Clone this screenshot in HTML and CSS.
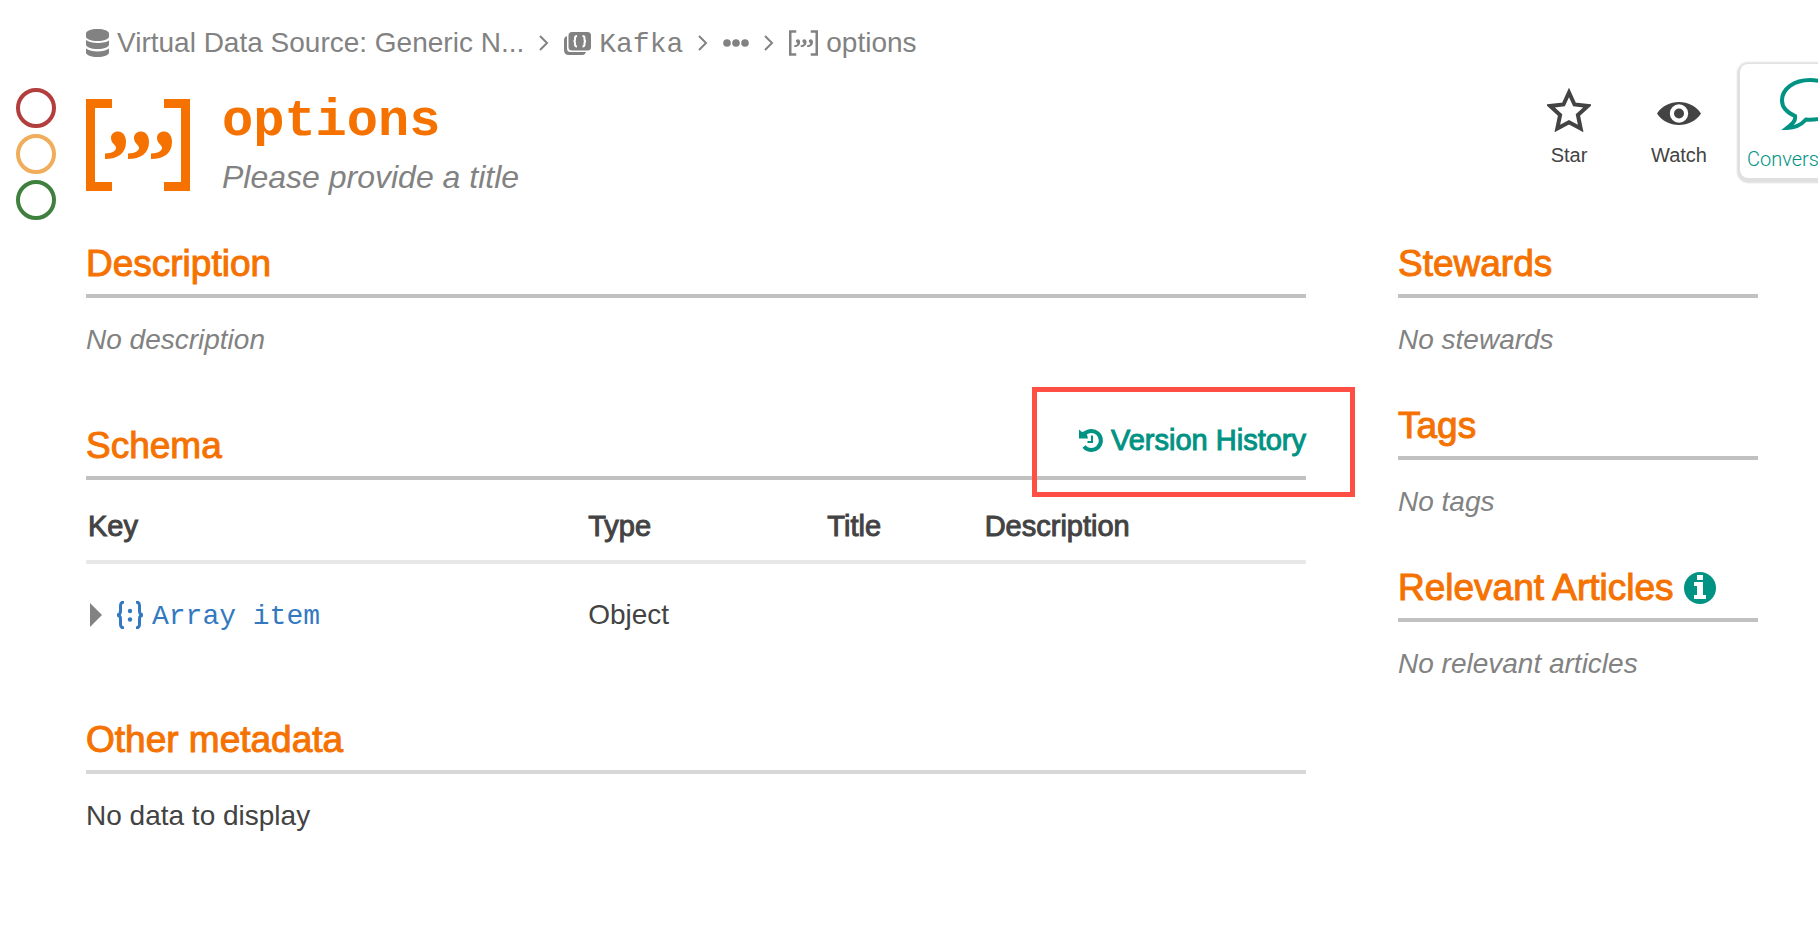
FILE: index.html
```html
<!DOCTYPE html>
<html lang="en">
<head>
<meta charset="utf-8">
<title>options</title>
<meta name="viewport" content="width=device-width, initial-scale=1">
<link rel="stylesheet" href="styles.css">
</head>
<body>
<svg class="sprite" aria-hidden="true">
  <symbol id="array" viewBox="0 0 104 92">
    <path d="M0 0h26v9H9v74h17v9H0zM104 0H78v9h17v74H78v9h26z"/>
    <path id="comma" d="M19 54.500c7-.3 11-2.500 11-5.500 0-3.500-5-4.500-5-10 0-4 3-6.500 7-6.500 5 0 8 4.500 8 10.500 0 11-8 17-21 17z"/>
    <use href="#comma" x="23"/>
    <use href="#comma" x="46"/>
  </symbol>
</svg>
<div class="page">
  <nav class="crumbs" aria-label="Breadcrumb">
    <a class="crumb" href="#">
      <svg class="icon-db" viewBox="0 0 23 28"><path d="M0 4.500C0 2 5 0 11.500 0S23 2 23 4.500v3C23 10 18 12 11.500 12S0 10 0 7.500zM0 11c2.500 2 7 3 11.500 3S23 13 23 11v4.500c0 2.500-5 4.500-11.500 4.500S0 18 0 15.500zM0 19.500c2.500 2 7 3 11.500 3s9-1 11.500-3v4c0 2.500-5 4.500-11.500 4.500S0 26 0 23.500z"/></svg>
      <span>Virtual Data Source: Generic N...</span>
    </a>
    <svg class="chevron" viewBox="0 0 10 16"><path d="M1 1l7 7-7 7"/></svg>
    <a class="crumb" href="#">
      <svg class="icon-stack" viewBox="0 0 27 23"><rect x="4.500" width="22.500" height="18.500" rx="3.500"/><path d="M3 4v12.500q0 3.500 3.500 3.500H22q-1 3-3.500 3H5q-5 0-5-5V8q0-3 3-4z"/><path class="knock" d="M13 4q-2 0-2 2v1.500q0 1.800-1.500 1.800 1.500 0 1.500 1.800V12.500q0 2 2 2M18.500 4q2 0 2 2v1.500q0 1.800 1.500 1.800-1.500 0-1.500 1.800V12.500q0 2-2 2"/></svg>
      <span class="mono">Kafka</span>
    </a>
    <svg class="chevron" viewBox="0 0 10 16"><path d="M1 1l7 7-7 7"/></svg>
    <button class="more" type="button" aria-label="Show hidden levels"><svg class="icon-dots" viewBox="0 0 26 8"><circle cx="4" cy="4" r="3.800"/><circle cx="13" cy="4" r="3.800"/><circle cx="22" cy="4" r="3.800"/></svg></button>
    <svg class="chevron" viewBox="0 0 10 16"><path d="M1 1l7 7-7 7"/></svg>
    <a class="crumb" href="#">
      <svg class="icon-array-small"><use href="#array"/></svg>
      <span>options</span>
    </a>
  </nav>

  <header class="head">
    <div class="flags">
      <button class="flag flag-red" type="button" aria-label="Deprecate"></button>
      <button class="flag flag-amber" type="button" aria-label="Warn"></button>
      <button class="flag flag-green" type="button" aria-label="Endorse"></button>
    </div>
    <svg class="icon-array"><use href="#array"/></svg>
    <div class="titles">
      <h1>options</h1>
      <p class="subtitle">Please provide a title</p>
    </div>
    <div class="actions">
      <button class="action" type="button">
        <svg class="icon-action" viewBox="0 0 44 44"><path class="star" d="M22 4.500l5.500 12 13.300 1.500-9.900 8.900 2.800 13.600L22 34.200l-11.700 6.300 2.800-13.600-9.900-8.900 13.300-1.500z"/></svg>
        <span>Star</span>
      </button>
      <button class="action" type="button">
        <svg class="icon-action" viewBox="0 0 44 44"><path fill-rule="evenodd" d="M0 25.500C5 18 13 14 22 14s17 4 22 11.500C39 33 31 37 22 37S5 33 0 25.500zM22 16.300a9.200 9.200 0 1 0 0 18.400 9.200 9.200 0 0 0 0-18.400z"/><circle cx="22" cy="25.500" r="5"/></svg>
        <span>Watch</span>
      </button>
      <button class="action talk" type="button">
        <svg class="icon-talk" viewBox="0 0 60 52"><path d="M30 2C14 2 2 11 2 22.500 2 29 7 34.500 15 38c1 5-3 8-8 12 8 0 14-3 19-8.500 18 1.500 32-7 32-19C58 11 46 2 30 2z"/></svg>
        <span>Conversations</span>
      </button>
    </div>
  </header>

  <div class="columns">
    <main class="main">
      <section>
        <div class="bar"><h2>Description</h2></div>
        <p class="note">No description</p>
      </section>
      <section>
        <div class="bar">
          <h2>Schema</h2>
          <a class="history" href="#">
            <svg class="icon-history" viewBox="0 0 24 24"><path class="arc" d="M5 6.500A9.500 9.500 0 1 1 5 18.500"/><path d="M0 1.500l3 2.500 4-1 2 7.500H0z"/><path class="hands" d="M13 7.500V14H8.500"/></svg>
            <span>Version History</span>
          </a>
          <div class="callout"></div>
        </div>
        <table class="schema">
          <thead>
            <tr><th class="col-key" scope="col">Key</th><th class="col-type" scope="col">Type</th><th class="col-title" scope="col">Title</th><th scope="col">Description</th></tr>
          </thead>
          <tbody>
            <tr>
              <td>
                <div class="key">
                  <button class="expand" type="button" aria-label="Expand"><svg class="icon-caret" viewBox="0 0 12 24"><path d="M0 0l12 12L0 24z"/></svg></button>
                  <a class="item" href="#">
                    <svg class="icon-object" viewBox="0 0 28 28"><path d="M8 1Q4.500 1 4.500 4.500V10q0 4-3.500 4 3.500 0 3.500 4v5.500Q4.500 27 8 27M20 1q3.500 0 3.500 3.500V10q0 4 3.500 4-3.500 0-3.500 4v5.500Q23.500 27 20 27"/><circle cx="14" cy="10" r="2.200"/><circle cx="14" cy="18.500" r="2.200"/></svg>
                    <span class="mono">Array item</span>
                  </a>
                </div>
              </td>
              <td>Object</td><td></td><td></td>
            </tr>
          </tbody>
        </table>
      </section>
      <section>
        <div class="bar bar-light"><h2>Other metadata</h2></div>
        <p class="plain">No data to display</p>
      </section>
    </main>

    <aside class="side">
      <section>
        <div class="bar"><h2>Stewards</h2></div>
        <p class="note">No stewards</p>
      </section>
      <section>
        <div class="bar"><h2>Tags</h2></div>
        <p class="note">No tags</p>
      </section>
      <section>
        <div class="bar">
          <h2>Relevant Articles</h2>
          <button class="info" type="button" aria-label="About relevant articles"><svg class="icon-info" viewBox="0 0 32 32"><circle cx="16" cy="16" r="16"/><path class="knock-fill" d="M13 3h6v5h-6zM10 10h9v13h3v4H10v-4h3v-9h-3z"/></svg></button>
        </div>
        <p class="note">No relevant articles</p>
      </section>
    </aside>
  </div>
</div>
</body>
</html>
```

FILE: styles.css
```css
* {
  box-sizing: border-box;
}

body {
  margin: 0;
  background: #fff;
  color: #434343;
  font: 28px/40px "Liberation Sans", Arial, sans-serif;
}

h1, h2, p {
  margin: 0;
}

a {
  color: inherit;
  text-decoration: none;
}

button {
  padding: 0;
  border: 0;
  background: none;
  color: inherit;
  font: inherit;
  cursor: pointer;
}

svg {
  display: block;
  flex: none;
  fill: currentColor;
}

.sprite {
  position: absolute;
  width: 0;
  height: 0;
}

.mono {
  padding-top: 4px;
  font-family: "Liberation Mono", "Courier New", monospace;
  line-height: 36px;
}

.page {
  padding: 23px 60px 40px 16px;
  overflow-x: clip;
}

/* Breadcrumb */
.crumbs {
  display: flex;
  align-items: center;
  gap: 15px;
  padding-left: 70px;
  color: #828282;
  white-space: nowrap;
}

.crumb {
  display: flex;
  align-items: center;
  gap: 8px;
}

.icon-db {
  width: 23px;
  height: 28px;
}

.icon-stack {
  width: 27px;
  height: 23px;
}

.icon-stack .knock {
  fill: none;
  stroke: #fff;
  stroke-width: 2;
}

.chevron {
  width: 10px;
  height: 16px;
  fill: none;
  stroke: currentColor;
  stroke-width: 2;
}

.icon-dots {
  width: 26px;
  height: 8px;
}

.icon-array-small {
  width: 29px;
  height: 26px;
}

/* Title row */
.head {
  display: flex;
  align-items: flex-start;
  margin-top: 1px;
}

.flags {
  display: flex;
  flex-direction: column;
  gap: 6px;
  margin: 24px 30px 0 0;
}

.flag {
  width: 40px;
  height: 40px;
  border: 4px solid;
  border-radius: 50%;
}

.flag-red {
  border-color: #b23f3d;
}

.flag-amber {
  border-color: #f0ad5c;
}

.flag-green {
  border-color: #3f803f;
}

.icon-array {
  width: 104px;
  height: 92px;
  margin: 35px 32px 0 0;
  color: #f57200;
}

.titles {
  flex: 1;
  padding-top: 28px;
}

h1 {
  color: #f57200;
  font: bold 52px/60px "Liberation Mono", "Courier New", monospace;
}

.subtitle {
  margin-top: 5px;
  color: #828282;
  font-size: 32px;
  font-style: italic;
}

.actions {
  display: flex;
  margin-right: -122px;
}

.action {
  display: flex;
  flex-direction: column;
  align-items: center;
  width: 110px;
  padding-top: 24px;
  font-size: 20px;
  line-height: 24px;
}

.icon-action {
  width: 44px;
  height: 44px;
  margin-bottom: 11px;
}

.star {
  fill: none;
  stroke: currentColor;
  stroke-width: 4;
}

.talk {
  width: 140px;
  margin-left: 6px;
  padding: 14px 0 7px;
  border-radius: 8px;
  box-shadow: 0 1px 2px 3px #e0e0e0, 0 3px 2px 2px #e0e0e0;
  color: #009384;
  font-family: Roboto, "Liberation Sans", sans-serif;
  font-weight: 300;
}

.icon-talk {
  width: 60px;
  height: 52px;
  margin-bottom: 17px;
  fill: none;
  stroke: currentColor;
  stroke-width: 4;
}

/* Content */
.columns {
  display: grid;
  grid-template-columns: minmax(0, 1fr) 360px;
  gap: 92px;
  margin-top: 22px;
  padding-left: 70px;
}

.main,
.side {
  display: flex;
  flex-direction: column;
  gap: 64px;
}

.side {
  gap: 44px;
}

.bar {
  position: relative;
  display: flex;
  align-items: center;
  padding-bottom: 8px;
  border-bottom: 4px solid #c1c1c1;
}

.bar-light {
  border-color: #d8d8d8;
}

h2 {
  color: #f57200;
  font-size: 37px;
  font-weight: 500;
  line-height: 44px;
  -webkit-text-stroke: 1px currentColor;
}

.note,
.plain {
  margin-top: 22px;
}

.note {
  color: #828282;
  font-style: italic;
}

.history {
  display: flex;
  align-items: center;
  align-self: flex-start;
  gap: 8px;
  margin: -4px 0 0 auto;
  color: #009384;
  font-size: 29px;
  -webkit-text-stroke: 1px currentColor;
}

.icon-history {
  width: 24px;
  height: 24px;
}

.icon-history .arc {
  fill: none;
  stroke: currentColor;
  stroke-width: 4;
}

.icon-history .hands {
  fill: none;
  stroke: currentColor;
  stroke-width: 2;
}

.callout {
  position: absolute;
  top: -37px;
  right: -49px;
  width: 323px;
  height: 110px;
  border: 5px solid #ff4f44;
  pointer-events: none;
}

.schema {
  width: 100%;
  border-collapse: collapse;
  table-layout: fixed;
}

.schema th {
  padding: 26px 2px 14px;
  border-bottom: 4px solid #e8e8e8;
  font-size: 29px;
  font-weight: 500;
  text-align: left;
  -webkit-text-stroke: 1px currentColor;
}

.schema td {
  padding: 31px 2px 19px;
}

.col-key {
  width: 41%;
}

.col-type {
  width: 19.6%;
}

.col-title {
  width: 12.9%;
}

.key {
  display: flex;
  align-items: center;
  gap: 14px;
  padding-left: 2px;
}

.expand {
  color: #828282;
}

.icon-caret {
  width: 12px;
  height: 24px;
}

.item {
  display: flex;
  align-items: center;
  gap: 8px;
  color: #3379c0;
}

.icon-object {
  width: 28px;
  height: 28px;
}

.icon-object path {
  fill: none;
  stroke: currentColor;
  stroke-width: 3;
}

.info {
  margin-left: 10px;
  color: #009384;
}

.icon-info {
  width: 32px;
  height: 32px;
}

.knock-fill {
  fill: #fff;
}
```
